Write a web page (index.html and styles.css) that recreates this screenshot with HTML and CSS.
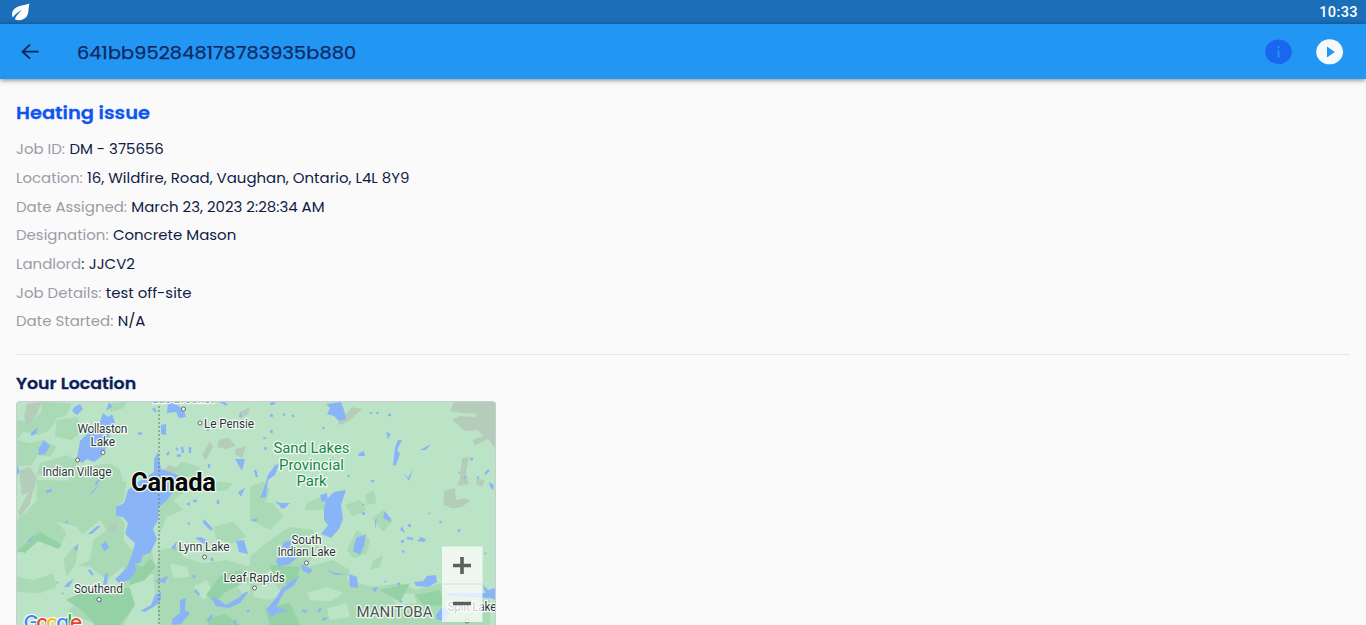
FILE: index.html
```html
<!DOCTYPE html>
<html lang="en">
<head>
<meta charset="utf-8">
<title>Job details</title>
<link rel="stylesheet" href="styles.css">
</head>
<body>
<div class="status">
  <svg class="leaf" viewBox="0 0 20 18"><path fill="#fff" d="M18.500 .5C14.500 2.300 9 2 4.800 4.800C1 7.500 .3 11.500 1.800 14.500C4 11.500 7 8.800 11 7C7.800 10 5 12.800 3.800 16.200C8 18.300 13.500 17 16 13C18.300 9 17 5 18.500 .5Z"/></svg>
  <span class="clock">10:33</span>
</div>
<header class="bar">
  <svg class="back" viewBox="0 0 20 18"><path d="M18.500 8.700H2.500M10 1.700L2.500 8.700L10 15.700"/></svg>
  <h1 class="title"><span class="wide">641bb952848178783935b880</span></h1>
  <svg class="act" viewBox="0 0 28 26"><ellipse cx="13.500" cy="12.800" rx="13.300" ry="12.300" fill="#1a66f0"/><path fill="#2196f3" d="M12.500 7h2v2.200h-2zM12.500 11.500h2v7h-2z"/></svg>
  <svg class="act" viewBox="0 0 28 26"><ellipse cx="13.600" cy="12.800" rx="13.400" ry="12.500" fill="#f6f9fc"/><path fill="#2196f3" d="M11 7.500V18.500L18.800 13Z"/></svg>
</header>
<main class="content">
  <h2 class="heading"><span class="wide">Heating issue</span></h2>
  <dl class="facts">
    <div class="row"><dt>Job ID:</dt><dd>DM - 375656</dd></div>
    <div class="row"><dt>Location:</dt><dd>16, Wildfire, Road, Vaughan, Ontario, L4L 8Y9</dd></div>
    <div class="row"><dt>Date Assigned:</dt><dd>March 23, 2023 2:28:34 AM</dd></div>
    <div class="row"><dt>Designation:</dt><dd>Concrete Mason</dd></div>
    <div class="row"><dt>Landlord<span class="colon">:</span></dt><dd>JJCV2</dd></div>
    <div class="row"><dt>Job Details:</dt><dd>test off-site</dd></div>
    <div class="row"><dt>Date Started:</dt><dd>N/A</dd></div>
  </dl>
  <h3 class="subheading"><span class="wide">Your Location</span></h3>
  <div class="map">
    <svg class="canvas" viewBox="16 401 480 224">
      <rect x="16" y="401" width="480" height="224" fill="#bbe4c6"/>
      <!-- woodland, in thirds of a pixel -->
      <g class="wood" transform="translate(0 340) scale(.33333)">
        <path d="M120 185L215 190 200 225 170 235 150 270 115 285 70 275 50 300V240L90 245 125 215ZM50 300L90 310 130 300 170 320 150 350 115 345 95 375 50 380ZM170 240L235 230 240 280 215 300 165 290ZM120 370L200 345 240 365 210 400 110 405ZM200 390L330 370 360 390 370 435H210ZM330 190L380 185 370 205 330 215ZM340 260L365 250 360 270 330 280ZM520 390L545 365 600 380 590 410 540 410Z"/>
      </g>
      <g class="wood" transform="translate(0 480) scale(.33333)">
        <path d="M110 0L380 5 370 60 345 90 375 130 370 180 395 210 370 260 320 300 270 260 225 255 200 290 190 240 220 200 260 180 230 140 170 125 200 160 180 200 110 180 50 220V120L80 95 110 60ZM480 30L540 10 560 30 520 60 550 90 500 110 480 160ZM480 210L530 200 550 230 610 250 680 240 750 260 780 240V435H480L460 300ZM50 290L100 300 160 280 170 320 120 340 50 335ZM380 210L450 190 470 280 420 290 380 330 400 380 370 435H300L200 400 250 340 360 320ZM620 0L700 10 680 30 640 35ZM640 140L700 125 740 170 700 190 650 180Z"/>
        <path class="pale" d="M240 170L300 120 320 150 280 180 270 240 225 260 235 200ZM390 310L430 300 455 330 430 350ZM90 345L170 340 200 390 180 435H120L100 380ZM510 250L560 260 570 290 520 295ZM580 320L620 300 640 340 610 360ZM700 300L740 310 770 330 730 345Z"/>
      </g>
      <g class="wood" transform="translate(250 500) scale(.33333)">
        <path d="M0 0L70 10 100 50 60 90 0 60ZM0 170L60 120 120 80 190 90 210 130 170 200 250 180 300 210 290 240 370 260 450 250 500 270 570 250 600 290 720 300V375H0ZM290 150L320 90 360 120 350 160 310 175ZM365 55L400 30 430 60 400 95ZM370 180L400 165 390 200 360 210ZM285 15L330 0 350 30 310 50Z"/>
        <path class="pale" d="M10 260L70 250 100 280 60 300 10 290ZM170 280L230 260 280 280 240 305 180 300ZM230 325L290 310 300 350 240 360ZM420 285L490 280 500 310 440 315ZM60 210L100 215 70 245 30 235Z"/>
      </g>
      <g class="wood" transform="translate(250 390) scale(.33333)"><path d="M0 290L40 275 60 300 50 330 20 360H0ZM345 315L370 300 380 340 350 345ZM170 340L215 320 230 360H165Z"/></g>
      <g class="deep">
        <path d="M66 600L90 588 130 588 135 605 120 625H95L82 610ZM17 551L30 540 40 532 62 545 58 549 38 541 25 553ZM220 576L240 570 250 580 225 592 215 603 206 595ZM270 565L300 567 295 585 275 582ZM265 608L290 603 300 625H270ZM380 590L410 583 400 602ZM415 595L440 590 445 605 425 606ZM205 620L225 614 240 625H210ZM130 562L143 567 150 558 156 566 145 580 130 585Z"/>
      </g>
      <g class="rock">
        <path d="M27 404L41 402 37 414 27 427 24 416ZM20 470L30 467 37 478 34 490 22 495 20 480ZM108 525L117 522 116 532 108 533ZM18 512L27 495 34 486 30 504 20 517ZM240 412L250 407 248 414 240 419ZM219 440L228 437 236 446 226 449 217 447ZM202 455L210 441 213 447 206 460ZM235 449L246 446 242 458 235 454ZM160 472L170 465 178 469 174 477 164 480ZM338 423L352 407 362 409 350 420 341 425ZM454 402H496V449L488 439 474 446 473 440 483 436 478 430 465 431 452 420 459 416 474 417 478 414 462 413 450 411ZM462 458L469 457 466 473 469 484 457 486 460 478ZM477 479L485 480 482 487 476 484ZM444 491L455 488 456 500 465 498 470 501 462 507 452 505 444 506ZM442 500L470 500 464 504 458 508 450 508Z"/>
      </g>
      <g class="lake">
        <path d="M100 422L103 413 108 417 112 414 115 423 109 431 110 440 102 456 94 462 87 459 82 463 77 459 80 441 87 434ZM74 407L80 404 83 409 77 415 72 411ZM39 448L44 440 50 446 45 454 38 455ZM31 433L38 427 36 434 31 436ZM154 472L154 459 158 452 161 469 181 476 177 487 166 501 159 507 158 520 153 529 157 539 150 553 143 555 141 562 134 565 137 570 129 580 119 583 115 579 126 569 132 555 135 543 125 534 128 523 123 517 116 516 116 507 124 503 128 490 138 482Z"/>
        <path d="M168 403L176 404 184 410 186 417 179 418 176 412 167 413ZM161 425L166 424 166 435 161 434ZM109 402L112 407 106 411ZM326 404L341 402 344 410 346 419 339 421 334 416 327 414 330 408ZM275 465L279 464 275 475 268 480 266 497 260 498 264 488 268 475ZM334 492L346 490 341 505 343 519 339 529 331 538 321 534 328 525 324 520 324 508 326 500ZM320 495L327 493 328 501 322 502ZM398 440L402 440 397 450 400 454 396 465 393 466 394 456 395 447ZM356 538L366 534 364 546 360 555 353 551ZM349 574L357 577 358 588 350 587ZM236 541L244 540 248 554 239 552ZM204 519L213 529 211 531 203 523ZM276 562L284 542 292 540 289 555 297 558 288 565 279 566ZM301 564L313 570 309 574 302 570ZM414 582L423 581 427 576 436 575 437 582 428 587 416 586ZM300 575L293 586 285 591 280 600 276 607 288 611 276 613 272 618 269 613 266 610 276 598 282 588 289 583ZM211 596L218 599 226 605 238 598 244 593 249 591 240 603 229 608 216 606ZM448 593H496V598H486L448 596ZM482 584L488 590 496 588V600L487 597ZM436 615L443 606 450 612 446 622 436 619Z"/>
        <path d="M101 545L106 541 109 548 104 551ZM74 548L78 544 77 552ZM88 534L97 526 101 526 92 534ZM67 583L74 579 69 587 64 587ZM108 573L107 584 103 585 105 574ZM180 600L186 598 185 610 190 613 181 624 172 625V619L180 613ZM155 595L161 592 161 600 155 606 145 612 140 611 151 605ZM155 581L168 576 165 583ZM195 538L201 537 210 542 204 544ZM171 548L177 541 175 550ZM239 417L240 412 242 417ZM235 459L245 459 242 471ZM238 492L245 488 241 497ZM275 502L283 503 290 503 284 509ZM386 432L391 434 388 439ZM359 453L364 451 365 456 358 456ZM420 450L431 444 426 450ZM403 473L408 478 413 469 409 481ZM375 521L377 518 375 530ZM385 511L390 518 391 522 383 518ZM402 526L405 533 400 530ZM421 537L426 539 424 542 417 541ZM326 570L336 573 346 574 336 575ZM372 588L378 587 375 593ZM489 482L494 485 493 490 490 487ZM370 480L375 480 373 483ZM16 463L20 472 17 475ZM95 483L103 474 96 486ZM90 494L100 483 92 494ZM27 541L37 533 29 542Z"/>
        <path class="flecks" d="M66 523L67 521M46 492L52 490M74 470L66 469M138 434L142 433M153 408L156 412M176 448L178 450M182 447L183 453M190 447L190 453M167 455L169 452M177 456L181 455M208 425V431M220 401L227 405M209 464V468M193 501H197M187 504H190M218 500V504M270 404L275 403M270 415L273 416M283 414L285 415M292 415L294 417M323 429L324 427M271 430L272 433M264 437L265 439M265 450L266 447M378 414L377 412M371 414V412M388 415H391M255 470L257 477M348 475L349 477M318 470V466M331 459L333 458M362 513L365 514M363 505L364 504M408 525L411 526M407 538L413 539M401 542L404 541M402 552L404 551M429 513L430 514M440 521L441 523M459 529V532M485 553L486 554M470 459H473M477 478L479 477M485 474L489 470M459 472L460 473M464 477L465 478M385 581L386 582M397 584H400M400 601L402 602M252 520L257 520M281 506L282 508M188 523L190 524M57 582L58 583M62 593L63 594M100 601L101 604M89 570L93 575M211 558L213 561M193 575L195 578M247 612L249 610M235 625V620M322 620L327 618M208 621L212 615M195 590L199 595M302 610L307 612M318 612L321 608"/>
      </g>
      <path class="border" d="M159 402V625"/>
      <g class="dots"><circle cx="103" cy="452.500" r="2"/><circle cx="77.500" cy="460" r="2"/><circle cx="183.500" cy="409" r="2"/><circle cx="200" cy="423" r="2"/><circle cx="204.500" cy="557" r="2"/><circle cx="254.500" cy="588" r="2"/><circle cx="306.500" cy="563" r="2"/><circle cx="99" cy="599.500" r="2"/><circle cx="467" cy="621" r="2"/></g>
      <g class="town">
        <text class="faint" x="152" y="402.500" textLength="62">Lac Brochet</text>
        <text x="77.500" y="433" textLength="50">Wollaston</text><text x="90.500" y="445.500" textLength="24.500">Lake</text>
        <text x="42.500" y="475.500" textLength="69">Indian Village</text><text x="204" y="427.500" textLength="50">Le Pensie</text>
        <text x="178.500" y="550.500" textLength="51">Lynn Lake</text><text x="223.500" y="581.500" textLength="61.500">Leaf Rapids</text>
        <text x="291.500" y="543.500" textLength="30">South</text><text x="277.500" y="556" textLength="58">Indian Lake</text>
        <text x="74" y="593" textLength="49">Southend</text><text x="447.500" y="611" textLength="49">Split Lake</text>
      </g>
      <g class="park"><text x="273.500" y="453" textLength="76">Sand Lakes</text><text x="279" y="469.500" textLength="65">Provincial</text><text x="296.500" y="486" textLength="30">Park</text></g>
      <text class="country" x="131" y="490.500" textLength="85">Canada</text>
      <text class="province" x="356.500" y="616.500" textLength="76">MANITOBA</text>
      <text class="brand" x="24" y="629" textLength="58"><tspan fill="#4285f4">G</tspan><tspan fill="#ea4335">o</tspan><tspan fill="#fbbc05">o</tspan><tspan fill="#4285f4">g</tspan><tspan fill="#34a853">l</tspan><tspan fill="#ea4335">e</tspan></text>
      <rect x="442" y="546.500" width="40.500" height="75.500" fill="#fff" fill-opacity=".75"/>
      <path d="M442 584H482.500" stroke="#d4ded7"/>
      <path d="M453 565.500H471M462 557V574M453 603.500H471" stroke="#5c5f5d" stroke-width="3.600"/>
      <path d="M16.500 625V405Q16.500 401.500 20 401.500H492Q495.500 401.500 495.500 405V625" fill="none" stroke="#c6ced4"/>
    </svg>
  </div>
</main>
</body>
</html>
```
FILE: styles.css
```css
* { box-sizing: border-box; }
body { margin: 0; height: 625px; overflow: hidden; background: #fafafa; color: #101a45; font-family: Poppins, Inter, sans-serif; }
h1, h2, h3, dl, dd { margin: 0; }
.wide { display: inline-block; transform: scaleX(1.085); transform-origin: left center; }
.status { height: 24px; background: #1a6fb8; display: flex; justify-content: space-between; align-items: center; padding: 0 8px 0 11px; }
.leaf { width: 20px; height: 18px; }
.clock { font: 500 14.500px Roboto, sans-serif; color: #fff; letter-spacing: .4px; padding-top: 1px; }
.bar { height: 55px; background: #2196f3; display: flex; align-items: center; padding: 0 22px 0 20px; box-shadow: 0 1px 5px rgba(0, 0, 0, .5); }
.back { width: 20px; height: 18px; fill: none; stroke: #14235a; stroke-width: 1.800; }
.title { flex: 1; margin-left: 37px; padding-top: 1px; font-size: 17.800px; font-weight: 400; -webkit-text-stroke: .25px #12265f; color: #12265f; letter-spacing: .1px; white-space: nowrap; }
.act { width: 28px; height: 26px; margin-left: 23px; }
.content { padding: 21px 16px 0; }
.heading { font-size: 17.900px; line-height: 26px; font-weight: 600; -webkit-text-stroke: .3px #0f55ee; color: #0f55ee; }
.facts { margin-top: 8.500px; padding-top: .8px; height: 220px; border-bottom: 1px solid #e6e6e6; }
.row { display: flex; gap: 4px; height: 28.700px; align-items: center; font-size: 13.900px; white-space: nowrap; width: max-content; transform: scaleX(1.077); transform-origin: left center; }
.row dt { color: #9a9ca6; }
.colon { color: #101a45; }
.subheading { margin-top: 17.500px; font-size: 16px; line-height: 24px; font-weight: 600; -webkit-text-stroke: .3px #0b1f5c; color: #0b1f5c; }
.map { margin-top: 4.500px; width: 480px; height: 224px; border-radius: 4px 4px 0 0; overflow: hidden; }
.canvas { display: block; width: 480px; height: 224px; font-family: Roboto, sans-serif; }
.wood { fill: #a9dab5; }
.pale { fill: #bbe4c6; }
.deep { fill: #94d2a5; }
.rock { fill: #b4ccb9; }
.lake { fill: #8ab4f8; }
.flecks { fill: none; stroke: #8ab4f8; stroke-width: 2.400; }
.border { stroke: #71907c; stroke-width: 1.300; stroke-dasharray: 2 2; }
.dots { fill: #fff; stroke: #626666; stroke-width: 1; }
.canvas text { paint-order: stroke; stroke: #f1faf3; stroke-width: 2.500px; stroke-linejoin: round; }
.town { font-size: 12px; fill: #30353a; }
.faint { fill: #9aa8a6; }
.park { font-size: 15px; fill: #188647; }
.country { font-size: 25.500px; font-weight: 700; fill: #080808; }
.province { font-size: 15px; fill: #4c5355; }
.brand { font-family: Poppins, Inter, sans-serif; font-size: 19px; font-weight: 500; }
```
